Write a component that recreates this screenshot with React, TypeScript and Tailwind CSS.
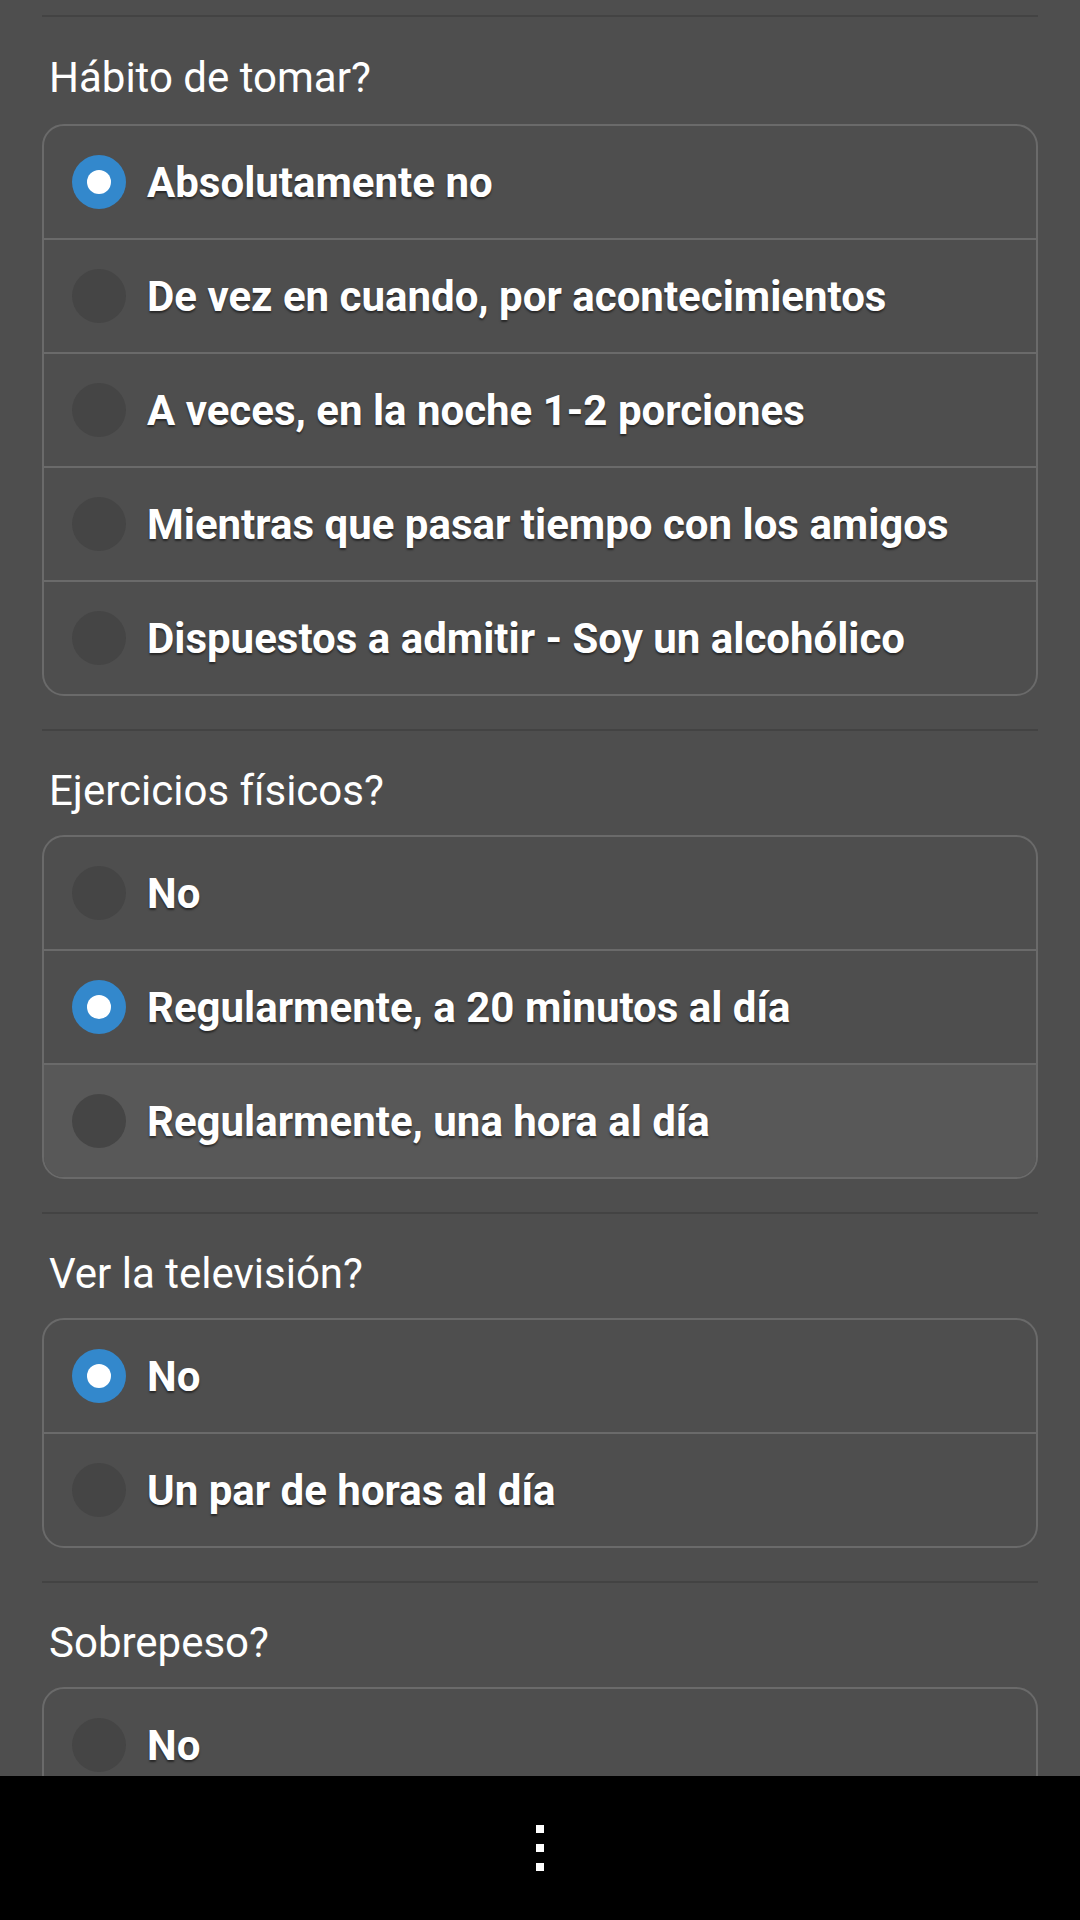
import React from "react";

type Question = {
  title: string;
  options: string[];
  selected: number;
  pressed?: number;
};

const questions: Question[] = [
  {
    title: "Hábito de tomar?",
    options: [
      "Absolutamente no",
      "De vez en cuando, por acontecimientos",
      "A veces, en la noche 1-2 porciones",
      "Mientras que pasar tiempo con los amigos",
      "Dispuestos a admitir - Soy un alcohólico",
    ],
    selected: 0,
  },
  {
    title: "Ejercicios físicos?",
    options: ["No", "Regularmente, a 20 minutos al día", "Regularmente, una hora al día"],
    selected: 1,
    pressed: 2,
  },
  {
    title: "Ver la televisión?",
    options: ["No", "Un par de horas al día"],
    selected: 0,
  },
  {
    title: "Sobrepeso?",
    options: ["No"],
    selected: -1,
  },
];

function Radio({ on }: { on: boolean }) {
  return on ? (
    <div className="w-[54px] h-[54px] rounded-full bg-[#3388cc] flex items-center justify-center shrink-0">
      <div className="w-[24px] h-[24px] rounded-full bg-white" />
    </div>
  ) : (
    <div className="w-[54px] h-[54px] rounded-full bg-[#454545] shrink-0" />
  );
}

function Section({ q, first }: { q: Question; first: boolean }) {
  return (
    <div className="flex flex-col">
      <div className="h-[2px] bg-[#434343]" />
      <div
        className={`${first ? "mt-[33px] mb-[19px]" : "mt-[32px] mb-[17px]"} pl-[7px] text-[42px] leading-[55px] text-white font-normal`}
      >
        {q.title}
      </div>
      <div className="border-2 border-[#6a6a6a] rounded-[22px] overflow-hidden">
        {q.options.map((o, i) => (
          <div
            key={i}
            className={`flex items-center pl-[28px] ${i > 0 ? "h-[114px] border-t-2 border-[#6a6a6a]" : "h-[112px]"} ${
              q.pressed === i ? "bg-[#585858]" : ""
            }`}
          >
            <Radio on={q.selected === i} />
            <span className="ml-[21px] pt-[2px] text-[42px] font-bold text-white leading-none [text-shadow:0_2px_2px_rgba(0,0,0,0.5)]">
              {o}
            </span>
          </div>
        ))}
      </div>
      <div className="h-[33px]" />
    </div>
  );
}

export default function App() {
  return (
    <div
      className="w-[1080px] h-[1920px] flex flex-col overflow-hidden bg-[#4e4e4e]"
      style={{ fontFamily: "Roboto, 'Noto Sans', sans-serif" }}
    >
      <div className="flex-1 overflow-hidden px-[42px] pt-[15px]">
        {questions.map((q, i) => (
          <Section key={i} q={q} first={i === 0} />
        ))}
      </div>
      <div className="h-[144px] bg-black flex items-center justify-center shrink-0">
        <div className="flex flex-col gap-[11px]">
          <div className="w-[8px] h-[8px] bg-white" />
          <div className="w-[8px] h-[8px] bg-white" />
          <div className="w-[8px] h-[8px] bg-white" />
        </div>
      </div>
    </div>
  );
}
